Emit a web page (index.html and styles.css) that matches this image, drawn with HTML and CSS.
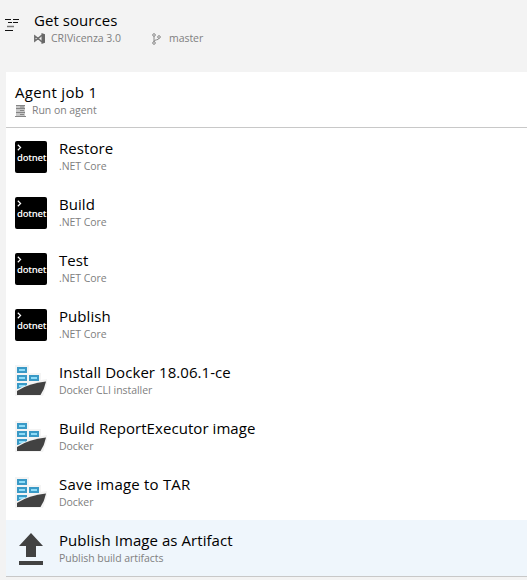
FILE: index.html
```
<!DOCTYPE html>
<html lang="en">
<head>
<meta charset="utf-8">
<title>Pipeline tasks</title>
<link rel="stylesheet" href="styles.css">
</head>
<body>
<svg class="defs" width="0" height="0" aria-hidden="true">
  <symbol id="docker" viewBox="0 0 32 32">
    <path d="M0 0H14V8H26V15L32 14V19L28 31H0Z" fill="#f4f4f4"/>
    <g fill="#8edcf8" stroke="#3999c6" stroke-width="2">
      <path d="M3 3H11V7H3ZM3 11H11V15H3ZM15 11H23V15H15ZM3 19H11V23H3Z"/>
    </g>
    <path d="M1 25Q13 18 32 15L28 28V31H1Z" fill="#f4f4f4"/>
    <path d="M2 26Q14 18 31 16.500Q29.500 24 25.500 30H2Z" fill="#424242"/>
  </symbol>
</svg>
<header class="sources">
  <svg class="sources-icon" width="14" height="12" viewBox="0 0 14 12" fill="none" stroke-width="1">
    <path d="M0 .5H6M8 .5H14M3 3.500H7M8 3.500H13M0 11.500H8" stroke="#111"/><path d="M2 7.500H9" stroke="#777" stroke-width="1.500"/>
  </svg>
  <div>
    <div class="title">Get sources</div>
    <div class="meta">
      <svg class="vs" width="11" height="11" viewBox="0 0 11 11"><path d="M.8 3L4 5.500.8 8ZM8 2.200L1 8M8 8.800L1 3" fill="none" stroke="#707070" stroke-width="1.500"/><path d="M7.500 0L11 1.300V9.700L7.500 11Z" fill="#686868"/></svg>
      <span class="repo">CRIVicenza 3.0</span>
      <svg class="branch" width="9" height="12" viewBox="0 0 9 12" fill="none" stroke="#888"><circle cx="2" cy="2" r="1.300"/><circle cx="7" cy="4" r="1.300"/><circle cx="2" cy="10" r="1.300"/><path d="M2 3.300V8.700M7 5.300C7 7.500 2 6 2 8.700"/></svg>
      <span>master</span>
    </div>
  </div>
</header>
<main class="job">
  <div class="job-head">
    <div class="title job-title">Agent job 1</div>
    <div class="meta">
      <svg class="server" width="11" height="12" viewBox="0 0 11 12"><path d="M1 0H10V12H1Z" fill="#c8c8c8"/><path d="M1 .5H10M1 3.500H10M1 7.500H10M0 11.500H11M5 2H9M5 5.500H9M5 9.500H9" stroke="#858585"/></svg>
      <span>Run on agent</span>
    </div>
  </div>
  <div class="task"><div class="icon dotnet"><svg width="5" height="7" viewBox="0 0 5 7"><path d="M.8.8L3.600 3.500.8 6.200" fill="none" stroke="#fff" stroke-width="1.200"/></svg><span>dotnet</span></div><div><div class="title">Restore</div><div class="meta">.NET Core</div></div></div>
  <div class="task"><div class="icon dotnet"><svg width="5" height="7" viewBox="0 0 5 7"><path d="M.8.8L3.600 3.500.8 6.200" fill="none" stroke="#fff" stroke-width="1.200"/></svg><span>dotnet</span></div><div><div class="title">Build</div><div class="meta">.NET Core</div></div></div>
  <div class="task"><div class="icon dotnet"><svg width="5" height="7" viewBox="0 0 5 7"><path d="M.8.8L3.600 3.500.8 6.200" fill="none" stroke="#fff" stroke-width="1.200"/></svg><span>dotnet</span></div><div><div class="title">Test</div><div class="meta">.NET Core</div></div></div>
  <div class="task"><div class="icon dotnet"><svg width="5" height="7" viewBox="0 0 5 7"><path d="M.8.8L3.600 3.500.8 6.200" fill="none" stroke="#fff" stroke-width="1.200"/></svg><span>dotnet</span></div><div><div class="title">Publish</div><div class="meta">.NET Core</div></div></div>
  <div class="task"><svg class="icon"><use href="#docker"/></svg><div><div class="title">Install Docker 18.06.1-ce</div><div class="meta">Docker CLI installer</div></div></div>
  <div class="task"><svg class="icon"><use href="#docker"/></svg><div><div class="title">Build ReportExecutor image</div><div class="meta">Docker</div></div></div>
  <div class="task"><svg class="icon"><use href="#docker"/></svg><div><div class="title save-title">Save image to TAR</div><div class="meta">Docker</div></div></div>
  <div class="task selected"><svg class="icon" viewBox="0 0 32 32"><path d="M16 0L28 13H21V24H11V13H4ZM4 28H28V32H4Z" fill="#424242"/></svg><div><div class="title">Publish Image as Artifact</div><div class="meta">Publish build artifacts</div></div></div>
</main>
</body>
</html>
```
FILE: styles.css
```
* { box-sizing: border-box; }
body {
  margin: 0;
  height: 580px;
  overflow: hidden;
  background: #f3f3f3;
  color: #000;
  font-family: "Open Sans", "Noto Sans", sans-serif;
}
.defs { display: block; }
.sources {
  display: flex;
  height: 72px;
  padding: 10px 0 0 5px;
}
.sources-icon { margin: 9px 15px 0 0; }
.title {
  font-size: 15px;
  line-height: 20px;
  letter-spacing: 0.06px;
  white-space: nowrap;
}
.job-title { letter-spacing: 0.3px; }
.save-title { letter-spacing: 0.2px; }
.meta {
  display: flex;
  align-items: center;
  height: 17px;
  font-size: 10.5px;
  line-height: 15px;
  letter-spacing: -0.05px;
  color: #808080;
  white-space: nowrap;
}
.vs { margin-right: 6px; }
.repo { width: 101px; }
.branch { margin-right: 8px; }
.job {
  margin-left: 6px;
  background: #fff;
  border-bottom: 1px solid #c8c8c8;
}
.job-head {
  height: 56px;
  padding: 10px 0 0 9px;
  border-bottom: 1px solid #c8c8c8;
}
.server { margin-right: 6px; }
.task {
  display: flex;
  height: 56px;
  padding: 10px 0 0 9px;
}
.selected { background: #eff6fc; }
.icon {
  width: 32px;
  height: 32px;
  margin: 3px 12px 0 0;
}
.dotnet {
  display: flex;
  flex-direction: column;
  padding: 3px 0 0 2px;
  border-radius: 2px;
  background: #000;
  color: #fff;
  font-size: 9.5px;
  font-weight: 600;
  line-height: 14px;
  letter-spacing: -0.25px;
}
```
